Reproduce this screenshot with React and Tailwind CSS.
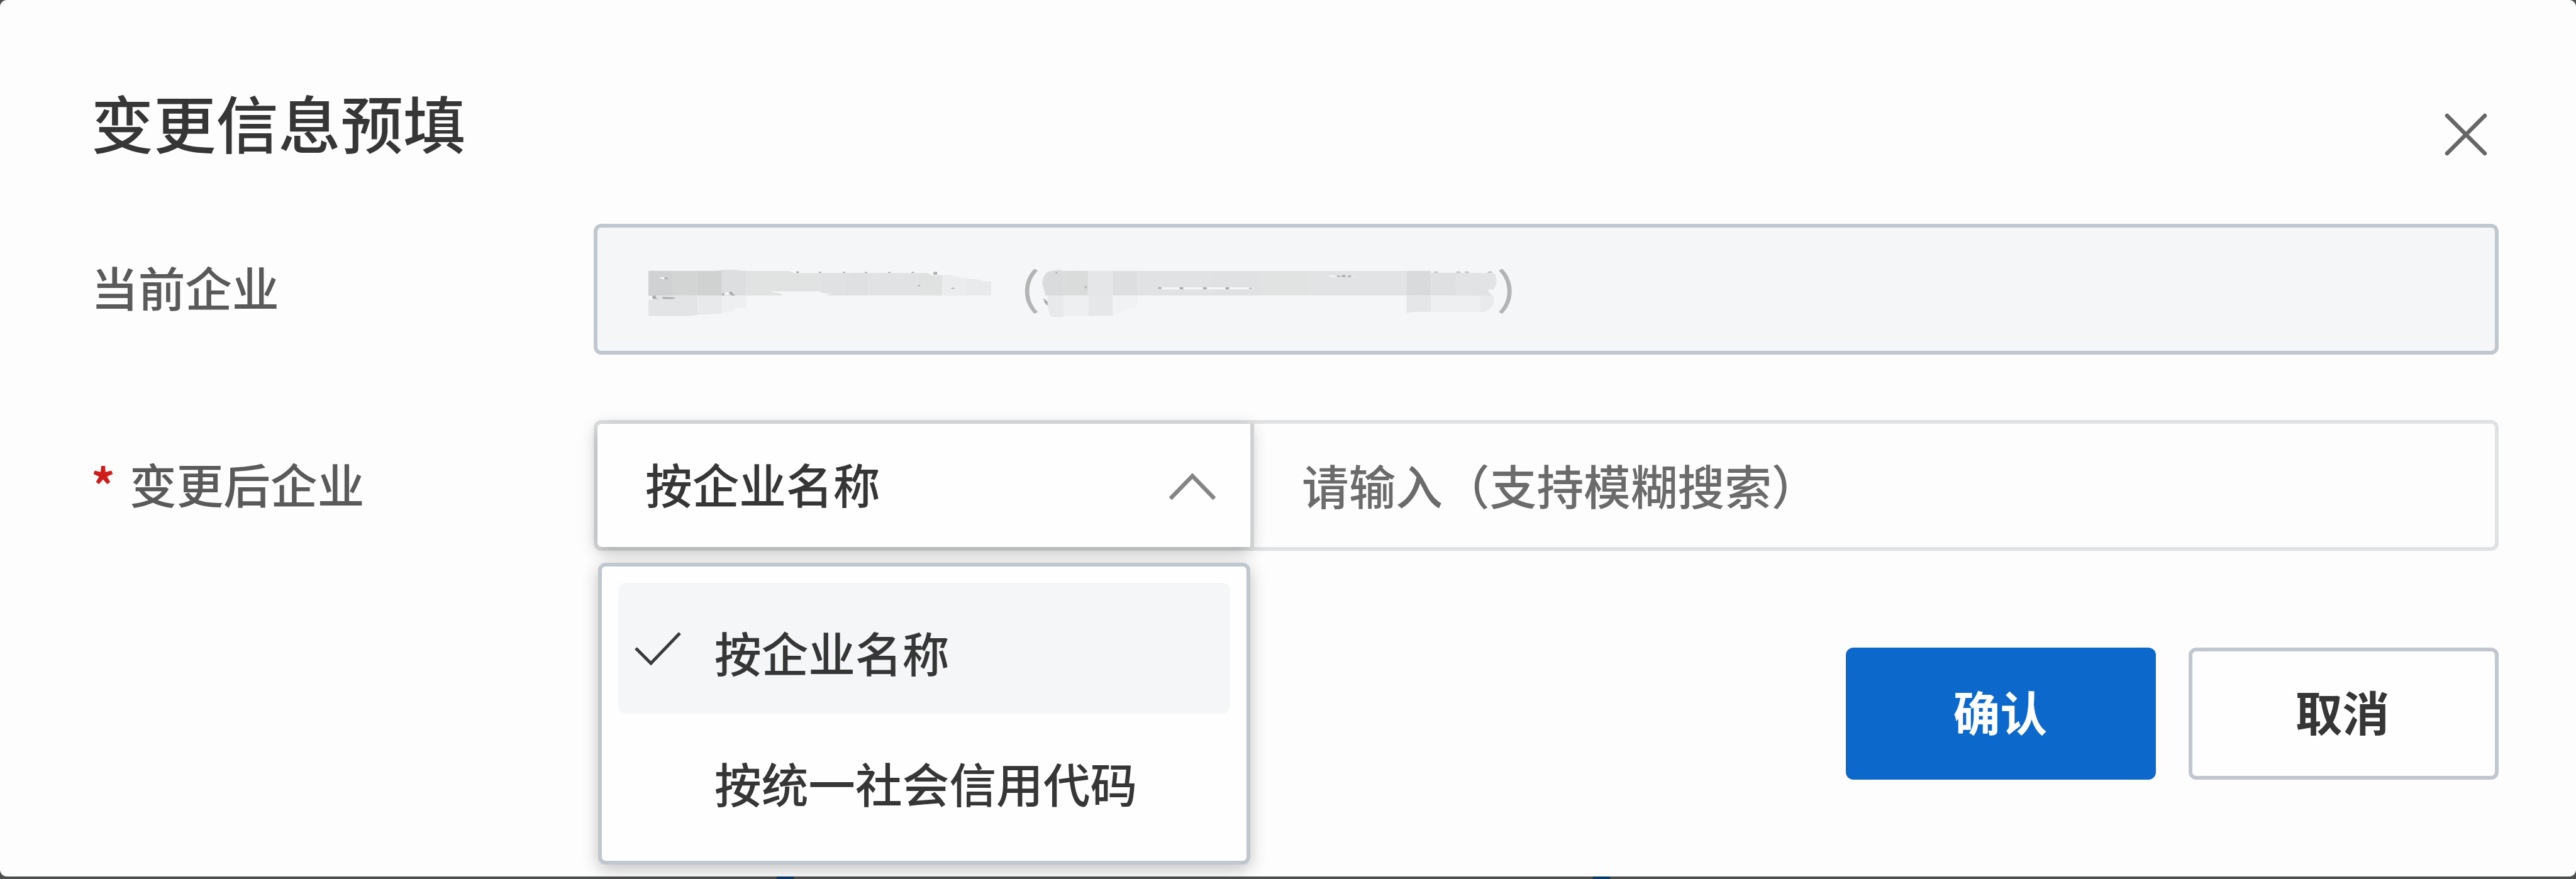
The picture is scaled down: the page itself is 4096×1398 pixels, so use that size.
import { useState } from 'react';

const SEARCH_TYPES = [
    { id: 'name', label: '按企业名称' },
    { id: 'code', label: '按统一社会信用代码' },
];

function CloseIcon() {
    return (
        <svg className="h-[68px] w-[68px]" viewBox="0 0 68 68" fill="none" stroke="#666666" strokeWidth="6.5" strokeLinecap="round">
            <path d="M4 4 64 64M64 4 4 64" />
        </svg>
    );
}

function ChevronUp() {
    return (
        <svg className="mt-[4px] h-[44px] w-[76px]" viewBox="0 0 76 44" fill="none" stroke="#858585" strokeWidth="6.5">
            <path d="M3 41 38 5 73 41" />
        </svg>
    );
}

function CheckIcon() {
    return (
        <svg className="h-[54px] w-[74px]" viewBox="0 0 74 54" fill="none" stroke="#3a3a3a" strokeWidth="5">
            <path d="M2 26 26 50 72 2" />
        </svg>
    );
}

// Masked company name
function MaskedName() {
    return (
        <svg className="mt-[10px] h-[78px] w-[545px] shrink-0" viewBox="1272 526 672 96" preserveAspectRatio="none">
            <rect x="1272" y="532" width="48" height="49" fill="#d0d1d3" />
            <rect x="1320" y="532" width="48" height="48" fill="#d3d5d4" />
            <rect x="1368" y="532" width="48" height="48" fill="#d0d2d1" />
            <path d="M1402 532 1416 530H1442L1464 532V580H1416V532Z" fill="#dddee0" />
            <path d="M1464 532H1546L1560 536H1608V572H1510L1530 576 1536 580H1464Z" fill="#e1e3e2" />
            <path d="M1608 536H1656V580H1620L1632 577 1612 575 1608 573Z" fill="#e0e1e3" />
            <rect x="1656" y="536" width="48" height="44" fill="#dfe0e2" />
            <rect x="1704" y="536" width="96" height="44" fill="#e1e2e4" />
            <path d="M1800 536H1820L1826 540H1848V580H1800Z" fill="#e0e2e1" />
            <path d="M1848 540H1866L1876 544 1896 546V580H1848Z" fill="#ebecee" />
            <path d="M1896 547 1920 549 1926 552H1944V580H1896Z" fill="#e9eaec" />
            <path d="M1272 588H1284L1290 580H1368V618L1356 620H1272Z" fill="#e3e4e6" />
            <path d="M1368 580H1416V615L1390 617 1368 618Z" fill="#e8e9eb" />
            <path d="M1416 580H1464V604H1444L1436 611 1420 614 1416 614Z" fill="#eeeff1" />
            <g fill="#a9abaa">
                <path d="M1304 545H1310V548H1304ZM1280 581 1286 580 1288 586 1294 587H1280ZM1300 583 1326 584 1320 587H1300ZM1430 574 1434 572 1442 580H1434ZM1416 577 1420 575V580H1416Z" />
                <rect x="1562" y="533" width="5" height="3" />
                <rect x="1606" y="534" width="5" height="2" />
                <rect x="1653" y="534" width="5" height="2" />
                <rect x="1696" y="534" width="5" height="2" />
                <rect x="1742" y="534" width="5" height="2" />
                <rect x="1788" y="534" width="5" height="2" />
                <rect x="1831" y="534" width="7" height="5" />
                <rect x="1800" y="560" width="5" height="2" />
                <rect x="1866" y="565" width="6" height="2" />
            </g>
            <path d="M1293 544H1302L1304 548H1299ZM1420 577 1428 572 1430 579H1424Z" fill="#f5f6f8" />
        </svg>
    );
}

// Masked credit code
function MaskedCode() {
    return (
        <svg className="mt-[10px] ml-[2px] h-[78px] w-[724px] shrink-0" viewBox="2044 526 893 96" preserveAspectRatio="none">
            <path d="M2088 532 2078 530 2062 532C2050 535 2046 545 2046 557L2052 580H2088Z" fill="#dadbdd" />
            <rect x="2088" y="532" width="48" height="48" fill="#dadcdb" />
            <rect x="2136" y="532" width="48" height="48" fill="#e5e6e8" />
            <rect x="2184" y="532" width="48" height="48" fill="#dddee0" />
            <rect x="2232" y="532" width="144" height="48" fill="#e1e2e4" />
            <rect x="2376" y="532" width="96" height="48" fill="#e0e1e3" />
            <rect x="2472" y="532" width="96" height="48" fill="#e1e3e2" />
            <rect x="2568" y="532" width="192" height="48" fill="#e2e3e5" />
            <rect x="2760" y="532" width="48" height="48" fill="#d9dadc" />
            <rect x="2808" y="536" width="96" height="44" fill="#dfe0e2" />
            <path d="M2856 536H2932C2938 546 2938 562 2930 568L2918 569 2928 580H2856Z" fill="#e2e3e5" />
            <path d="M2056 580H2088V620C2082 625 2066 626 2060 618L2056 600Z" fill="#e8e9eb" />
            <rect x="2088" y="580" width="48" height="40" fill="#eeeff1" />
            <rect x="2136" y="580" width="48" height="40" fill="#e6e7e9" />
            <path d="M2184 580H2232V604L2206 607 2200 615 2184 620Z" fill="#f1f2f4" />
            <path d="M2760 580H2808V612H2774L2760 615Z" fill="#e5e6e8" />
            <path d="M2808 580H2904V612H2808Z" fill="#eeeff1" />
            <path d="M2904 580H2930C2934 592 2928 608 2912 612H2904Z" fill="#e9eaec" />
            <path d="M2280 564H2456L2462 566 2452 568H2280ZM2606 541H2616L2628 544H2652L2660 541 2658 544H2612Z" fill="#f5f6f8" />
            <g fill="#a9abaa">
                <path d="M2048 585 2056 592V600L2050 594Z" />
                <rect x="2273" y="564" width="6" height="3" />
                <rect x="2315" y="564" width="7" height="4" />
                <rect x="2361" y="564" width="7" height="4" />
                <rect x="2405" y="564" width="7" height="4" />
                <rect x="2451" y="565" width="6" height="2" />
                <rect x="2624" y="541" width="5" height="3" />
                <rect x="2633" y="540" width="7" height="4" />
                <rect x="2645" y="541" width="6" height="3" />
                <rect x="2072" y="534" width="3" height="3" />
                <rect x="2129" y="562" width="3" height="4" />
                <rect x="2813" y="533" width="9" height="3" opacity=".6" />
                <rect x="2857" y="533" width="9" height="3" opacity=".6" />
                <rect x="2874" y="533" width="9" height="3" opacity=".6" />
                <rect x="2919" y="533" width="9" height="3" opacity=".6" />
            </g>
        </svg>
    );
}

export default function App() {
    const [searchType, setSearchType] = useState('name');
    const current = SEARCH_TYPES.find((type) => type.id === searchType);

    return (
        <div className="relative h-[1398px] w-[4096px] overflow-hidden bg-[#4d4e4e] font-['Noto_Sans_CJK_SC',sans-serif] text-[74.7px] leading-none font-medium">
            {/* Page behind the dialog */}
            <div className="absolute bottom-0 left-[1235px] h-[4px] w-[27px] bg-[#0c3767]" />
            <div className="absolute bottom-0 left-[2533px] h-[4px] w-[27px] bg-[#0c3767]" />

            <div className="relative h-[1394px] rounded-[11px] bg-[#fdfdfd] pr-[123px] pl-[145px]">
                <div className="flex h-[356px] justify-between pt-[143px]">
                    <h2 className="text-[99.2px] leading-[100px] text-[#363636]">变更信息预填</h2>
                    <button className="mt-[37px] mr-[18px] h-[68px]">
                        <CloseIcon />
                    </button>
                </div>

                <div className="flex h-[208px] items-center">
                    <span className="w-[799px] shrink-0 pb-[8px] text-[#5a5a5a]">当前企业</span>
                    <div className="flex h-full flex-1 items-center rounded-[12px] border-6 border-[#c1c7cf] bg-[#f5f6f8] pl-[81px]">
                        <MaskedName />
                        <span className="ml-[3px] text-[#b3b4b4]">（</span>
                        <MaskedCode />
                        <span className="text-[#b3b4b4]">）</span>
                    </div>
                </div>

                <div className="mt-[104px] flex h-[208px] items-center">
                    <label className="flex w-[799px] shrink-0 items-center pb-[6px] text-[#5a5a5a]">
                        <span className="w-[61px] font-bold text-[#d01c1c]">*</span>
                        变更后企业
                    </label>
                    <div className="relative flex h-full flex-1 rounded-[12px] border-6 border-[#dfe1e3]">
                        <button className="flex w-[1038px] items-center justify-between rounded-l-[8px] bg-[#fefefe] pr-[54px] pl-[76px] text-[#363636] shadow-[0_7px_26px_rgba(0,0,0,0.28)]">
                            <span className="pb-[6px]">{current.label}</span>
                            <ChevronUp />
                        </button>
                        <div className="flex flex-1 items-center border-l-6 border-[#cfd1d3] pb-[2px] pl-[76px] text-[#6b6b6b]">
                            请输入（支持模糊搜索）
                        </div>

                        <ul className="absolute top-[221px] left-[1px] h-[480px] w-[1037px] rounded-[12px] border-6 border-[#c1c7cf] bg-[#fefefe] p-[26px] shadow-[0_7px_26px_rgba(0,0,0,0.24)]">
                            {SEARCH_TYPES.map((type) => (
                                <li
                                    key={type.id}
                                    onClick={() => setSearchType(type.id)}
                                    className={`flex h-[208px] items-center rounded-[12px] pl-[26px] text-[#363636] ${type.id === searchType ? 'bg-[#f5f6f8]' : ''}`}
                                >
                                    <span className="w-[127px] pt-[2px]">{type.id === searchType && <CheckIcon />}</span>
                                    <span className="pt-[12px]">{type.label}</span>
                                </li>
                            ))}
                        </ul>
                    </div>
                </div>

                <div className="mt-[154px] flex h-[210px] justify-end gap-[52px] font-bold">
                    <button className="w-[493px] rounded-[12px] bg-[#0d68cb] pr-[2px] pb-[8px] text-white">确认</button>
                    <button className="w-[493px] rounded-[12px] border-6 border-[#c1c7cf] bg-[#fefefe] pr-[4px] pb-[8px] text-[#363636]">取消</button>
                </div>
            </div>
        </div>
    );
}
